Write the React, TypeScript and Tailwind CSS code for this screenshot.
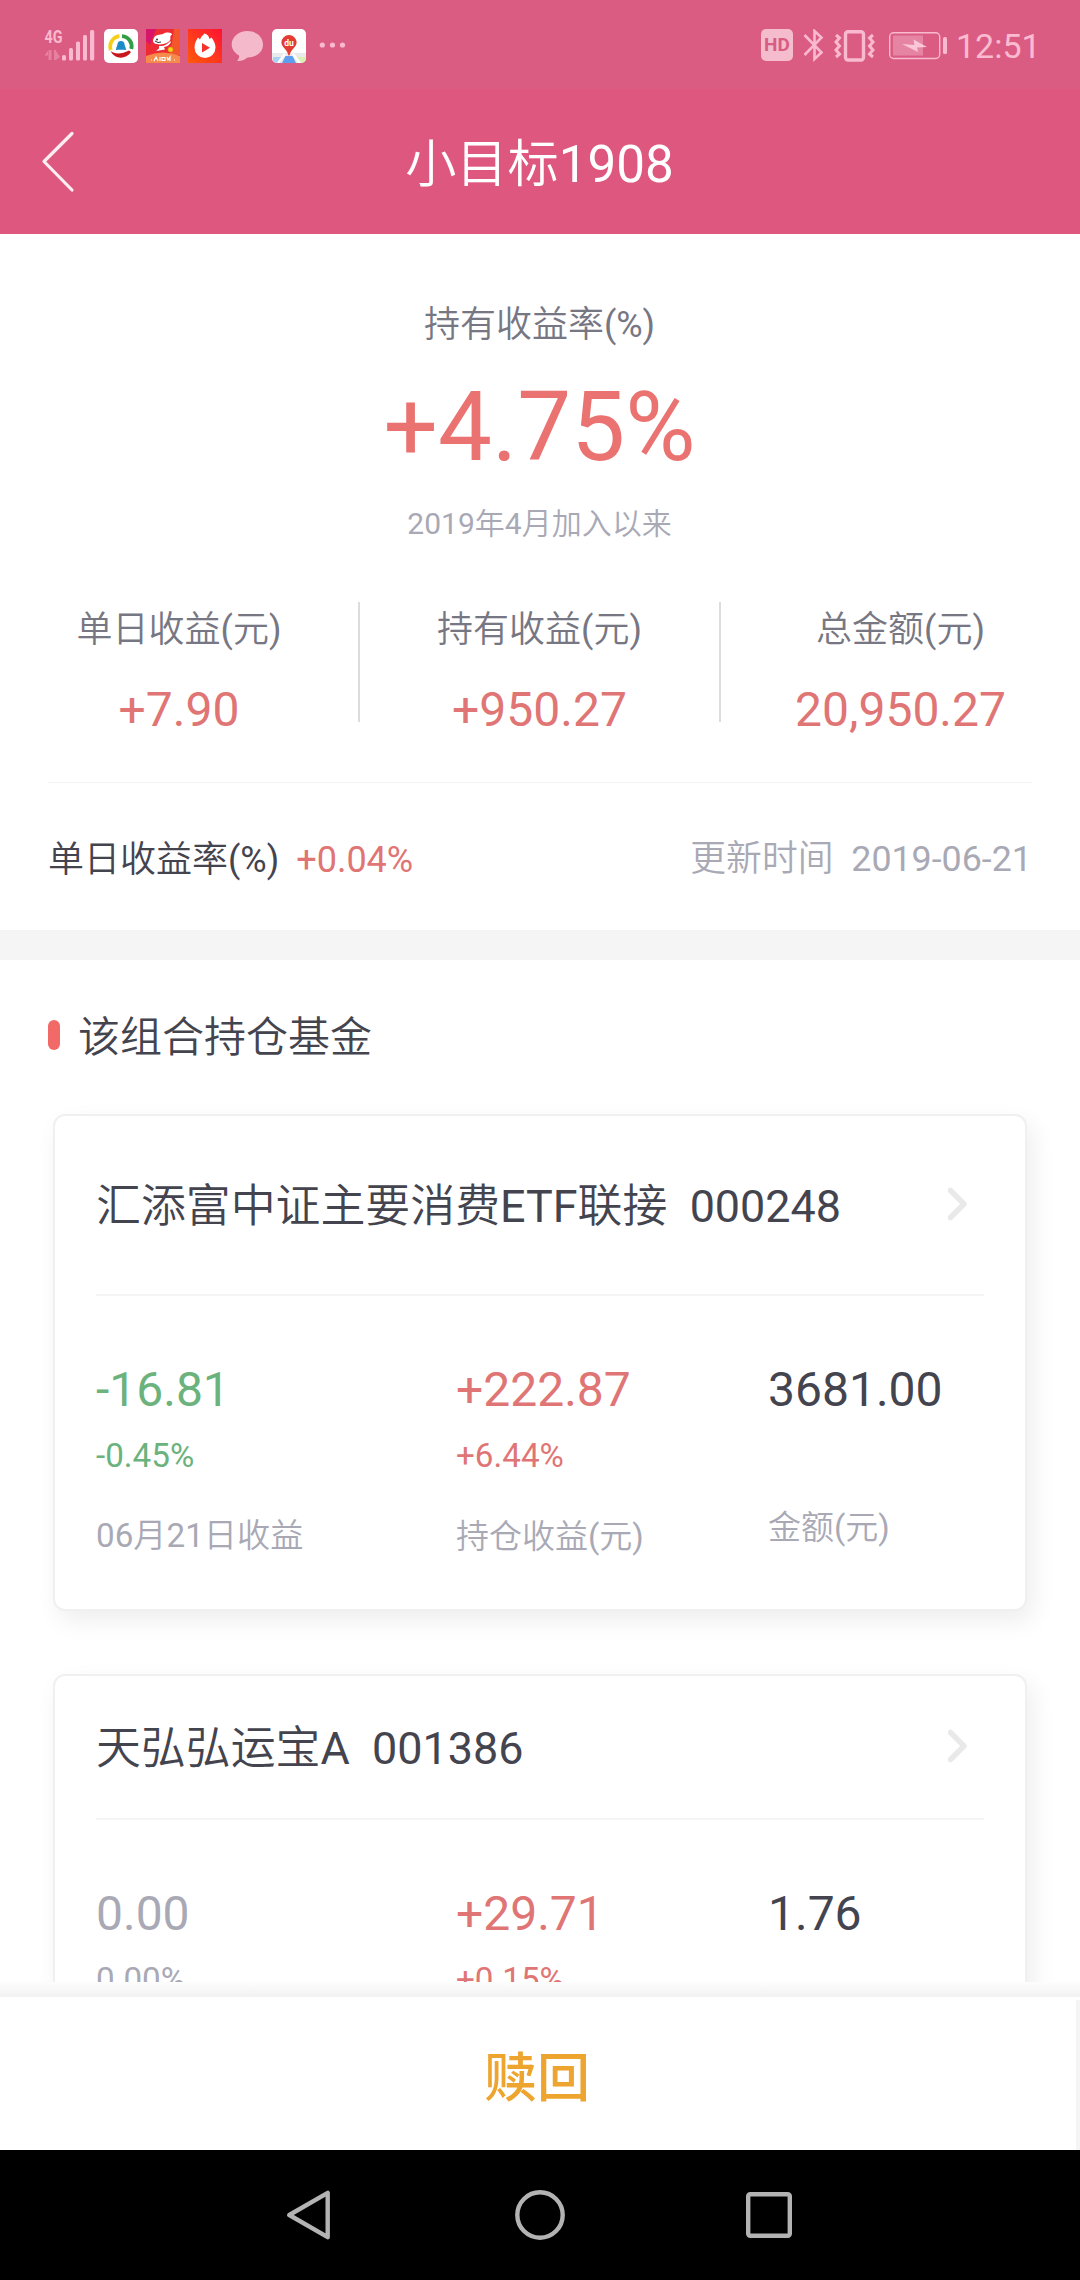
import { clsx } from "clsx";

const stats = [
    { label: "单日收益(元)", value: "+7.90" },
    { label: "持有收益(元)", value: "+950.27" },
    { label: "总金额(元)", value: "20,950.27" },
];

const funds = [
    {
        name: "汇添富中证主要消费ETF联接",
        code: "000248",
        day: "-16.81",
        dayRate: "-0.45%",
        dayColor: "text-[#6bb27d]",
        hold: "+222.87",
        holdRate: "+6.44%",
        amount: "3681.00",
        labels: ["06月21日收益", "持仓收益(元)", "金额(元)"],
        headHeight: "h-[178px]",
    },
    {
        name: "天弘弘运宝A",
        code: "001386",
        day: "0.00",
        dayRate: "0.00%",
        dayColor: "text-[#a9a9b5]",
        hold: "+29.71",
        holdRate: "+0.15%",
        amount: "1.76",
        labels: [],
        headHeight: "h-[142px]",
    },
];

const SignalIcon = () => (
    <svg className="-mt-2" width="52" height="42" viewBox="44 21 52 42" fill="#f9b9cf">
        <text x="44.5" y="43.2" fontSize="18.5" fontWeight="700" textLength="18" lengthAdjust="spacingAndGlyphs" fontFamily="Roboto">
            4G
        </text>
        <g opacity="0.4">
            <path d="M48.500 60V50L44.500 55.500H48V60ZM49 50H51.500V60H49ZM54 50H56V60H54ZM56 60V51L60 57Z" />
        </g>
        <rect x="62" y="55" width="4" height="5.500" rx="1.500" />
        <rect x="69" y="48" width="4" height="12.500" rx="1.500" />
        <rect x="76" y="41.500" width="4" height="19" rx="1.500" />
        <rect x="83" y="35" width="4" height="25.500" rx="1.500" />
        <rect x="90" y="30" width="4.200" height="30.500" rx="1.500" />
    </svg>
);

const TencentIcon = () => (
    <svg width="34" height="34" viewBox="0 0 34 34" fill="none">
        <rect width="34" height="34" rx="5" fill="#fff" />
        <path d="M18 7.200A10.200 10.200 0 0 1 27.300 20" stroke="#2f9e45" strokeWidth="3.800" />
        <path d="M6.800 21A10.400 10.400 0 0 1 15.500 7.200" stroke="#f4cf1a" strokeWidth="3.800" />
        <path d="M6.500 22C11 25.500 18 25 25 21.500L27 23C22 30.500 11 31 6.500 22Z" fill="#c8161d" />
        <path d="M12 21C12 18.500 13.200 17.500 13.400 15.500C13.600 13 15 12 17 12S20.400 13 20.600 15.500C20.800 17.500 22 18.500 22 21C20 20.500 14 20.500 12 21Z" fill="#1c8cc8" />
    </svg>
);

const JdIcon = () => (
    <svg width="34" height="34" viewBox="0 0 34 34">
        <rect width="34" height="34" fill="#ee2b35" />
        <path d="M0 0H10L4 16L0 12Z" fill="#d6156b" />
        <path d="M28 0H34V26H24Z" fill="#f5552b" />
        <path d="M0 34V27Q17 20 34 27V34Z" fill="#f58a4b" />
        <path d="M8 9C9 5.500 14 6 17 5C20 3 26 3 26 6C24.500 6 24 7.500 24.500 10C23 15 13 17 8 14C6.500 12.500 7 10 8 9Z" fill="#fff" />
        <path d="M13 17C18 17.500 22 15 24 12L25 13C23 16.500 21 17.500 18 18L19 20.500L10 22L13 19.500Z" fill="#fff" />
        <path d="M9 12Q12 14.500 15 13" stroke="#333" strokeWidth="1" fill="none" />
        <circle cx="11" cy="10.500" r="1" fill="#333" />
        <circle cx="24.500" cy="20.500" r="2.600" fill="#f7d11c" stroke="#c98c00" strokeWidth="0.600" />
        <path d="M5 31H6M8 32L10 28L12 32M14 28V32M16 28.500H19V31.500H16ZM21 28L22 31L24 28V32M28 31H29" stroke="#fff" strokeWidth="1.200" fill="none" />
    </svg>
);

const HuoshanIcon = () => (
    <svg width="34" height="34" viewBox="0 0 34 34">
        <defs>
            <linearGradient id="fire" x1="1" y1="0" x2="0" y2="1">
                <stop offset="0" stopColor="#ff1233" />
                <stop offset="1" stopColor="#ff5a0a" />
            </linearGradient>
        </defs>
        <rect width="34" height="34" fill="url(#fire)" />
        <path d="M16.500 4.500C19 5 21 7 21.500 10L23.500 8.500C26 12 27.500 15 27.500 18.500A10.500 10.500 0 0 1 6.500 18.500C6.500 14 8.500 11 10 8.500L12 10.500C13 8 14.500 6.500 16.500 4.500Z" fill="#fff" />
        <path d="M14 14L22 18.800L14 23.500Z" fill="#f6302a" />
    </svg>
);

const BaiduMapIcon = () => (
    <svg width="34" height="34" viewBox="0 0 34 34">
        <defs>
            <clipPath id="tile">
                <rect width="34" height="34" rx="5" />
            </clipPath>
        </defs>
        <g clipPath="url(#tile)">
            <rect width="34" height="34" fill="#fff" />
            <rect y="24" width="34" height="10" fill="#e9eaec" />
            <path d="M1 28H12L8 34H1Z" fill="#a9d2f5" />
            <path d="M13.500 27H20.500L24 34H10Z" fill="#5d9fee" />
            <path d="M22 28H34V34H27Z" fill="#d9efb4" />
            <path d="M13 25L6 34M21 25L28 34" stroke="#fff" strokeWidth="2.200" />
        </g>
        <path d="M17 6A7.600 7.600 0 0 1 24.600 13.500C24.600 18 19 20 17.500 26.500H16.500C15 20 9.400 18 9.400 13.500A7.600 7.600 0 0 1 17 6Z" fill="#e23c33" />
        <text x="17" y="17" fontSize="8.500" fontWeight="700" textAnchor="middle" fontFamily="Roboto" fill="#fff">
            du
        </text>
    </svg>
);

const VibrateIcon = () => (
    <svg className="ml-2" width="42" height="34" viewBox="833 28 42 34" fill="none" stroke="#f9b9cf">
        <rect x="845.500" y="30.700" width="18" height="28.300" rx="2.500" strokeWidth="3.400" />
        <path d="M836 34L839.500 37L836 41L839.500 45L836 49L839.500 53L836 56" strokeWidth="3" />
        <path d="M873 34L869.500 37L873 41L869.500 45L873 49L869.500 53L873 56" strokeWidth="3" />
    </svg>
);

const BatteryIcon = () => (
    <svg className="ml-[13px]" width="60" height="32" viewBox="888 29 60 32">
        <rect x="889.700" y="32.700" width="50" height="25.800" rx="4" fill="none" stroke="#f9b9cf" strokeWidth="1.400" />
        <rect x="893" y="35.500" width="30" height="20" fill="#e685a3" />
        <rect x="943" y="37" width="4" height="17" rx="1.500" fill="#f9b9cf" />
        <path d="M902 44L914.500 45L913.500 39.500L927 47L917 47.500L918 52Z" fill="#fbc6d7" />
    </svg>
);

const StatusBar = () => (
    <div className="flex h-[89px] items-start justify-between bg-[#da5c83] pl-11 pr-10 pt-[29px]">
        <div className="flex items-start">
            <SignalIcon />
            <div className="ml-2 flex gap-2">
                <TencentIcon />
                <JdIcon />
                <HuoshanIcon />
                <svg width="34" height="34" viewBox="230 29 34 34" fill="#f4b9cb">
                    <path d="M247.500 31C256.500 31 263 37 263 44.500S256.500 57.500 247.500 57.500C245.500 59.500 241 61.500 237 61C238.500 59.500 239.500 57.500 239 55.500C234.500 53 231.700 49 231.700 44.500C231.700 37 238.500 31 247.500 31Z" />
                </svg>
                <BaiduMapIcon />
            </div>
            <svg className="ml-3" width="30" height="34" viewBox="318 29 30 34" fill="#f9b9cf">
                <circle cx="322.300" cy="45" r="2.600" />
                <circle cx="332.500" cy="45" r="2.600" />
                <circle cx="342.500" cy="45" r="2.600" />
            </svg>
        </div>
        <div className="flex items-start">
            <div className="flex h-8 w-8 items-center justify-center rounded-[5px] bg-[#f4bccd] text-[19px] font-bold text-[#da5c83]">
                HD
            </div>
            <svg className="ml-2.5" width="22" height="33" viewBox="803 29 22 33" fill="none" stroke="#f9b9cf" strokeWidth="2.600">
                <path d="M804.500 35L821.500 52.500L814.500 59V31L821.500 37.500L804.500 55" />
            </svg>
            <VibrateIcon />
            <BatteryIcon />
            <span className="ml-2 w-[84px] whitespace-nowrap text-[34px] leading-[35px] text-[#fabbd0]">12:51</span>
        </div>
    </div>
);

const FundCard = ({ fund }: { fund: (typeof funds)[number] }) => (
    <div className="mx-[53px] h-[497px] shrink-0 rounded-xl border-2 border-[#f0f0f0] bg-white px-[41px] shadow-[6px_10px_24px_rgba(0,0,0,0.07)]">
        <div className={clsx("flex items-center justify-between", fund.headHeight)}>
            <h3 className="pt-1 text-[44.9px] leading-[50px] text-[#44444f]">
                {fund.name}&nbsp;&nbsp;{fund.code}
            </h3>
            <svg className="mb-0.5 mr-4" width="20" height="34" viewBox="0 0 20 34" fill="none" stroke="#e9e9e9" strokeWidth="5.500">
                <path d="M2.500 3.500L16 17L2.500 30.500" strokeLinecap="round" strokeLinejoin="round" />
            </svg>
        </div>
        <div className="h-0.5 bg-[#f5f5f5]" />
        <div className="grid grid-cols-[360px_312px_1fr] pt-[69px] text-[33.2px] leading-10">
            <div className={fund.dayColor}>
                <p className="text-5xl leading-[50px]">{fund.day}</p>
                <p className="mt-[21px]">{fund.dayRate}</p>
                <p className="mt-10 text-[#a9a9b5]">{fund.labels[0]}</p>
            </div>
            <div className="text-[#df7574]">
                <p className="text-5xl leading-[50px]">{fund.hold}</p>
                <p className="mt-[21px]">{fund.holdRate}</p>
                <p className="mt-[41px] text-[33px] text-[#a9a9b5]">{fund.labels[1]}</p>
            </div>
            <div className="text-[#44444f]">
                <p className="text-5xl leading-[50px]">{fund.amount}</p>
                <p className="mt-[93px] text-[33px] text-[#a9a9b5]">{fund.labels[2]}</p>
            </div>
        </div>
    </div>
);

const App = () => {
    return (
        <div className="flex h-[2280px] w-[1080px] flex-col overflow-hidden bg-white font-[Roboto,'Noto_Sans_CJK_SC_DemiLight','Noto_Sans_CJK_SC',sans-serif]">
            <StatusBar />
            {/* Header */}
            <div className="grid h-[145px] grid-cols-[1fr_auto_1fr] items-center bg-[#de577f] px-10">
                <svg width="36" height="62" viewBox="40 131 36 62" fill="none" stroke="#fdeef3" strokeWidth="3.200" strokeLinecap="round" strokeLinejoin="round">
                    <path d="M72 133.500L44 161.500L72 190" />
                </svg>
                <h1 className="pr-px pt-[7px] text-[51.2px] leading-[60px] text-white">小目标1908</h1>
            </div>

            <div className="flex min-h-0 flex-1 flex-col overflow-hidden">
                {/* Summary */}
                <div className="flex shrink-0 flex-col items-center pr-px pt-[71px]">
                    <p className="text-4xl leading-10 text-[#777783]">持有收益率(%)</p>
                    <p className="mt-8 text-8xl leading-[100px] text-[#ea7372]">+4.75%</p>
                    <p className="mt-[27px] text-3xl leading-10 text-[#a9a9b5]">2019年4月加入以来</p>
                </div>
                <div className="mt-[58px] grid h-[120px] shrink-0 grid-cols-[360px_361px_359px]">
                    {stats.map((item, i) => (
                        <div
                            key={item.label}
                            className={clsx("flex h-[120px] flex-col items-center pt-2", i < 2 && "border-r-2 border-[#dcdcde]")}
                        >
                            <p className="text-4xl leading-10 text-[#777783]">{item.label}</p>
                            <p className="mt-[35px] text-5xl leading-[50px] text-[#df7574]">{item.value}</p>
                        </div>
                    ))}
                </div>
                <div className="mx-12 mt-[60px] h-px shrink-0 bg-[#f3f3f3]" />
                <div className="flex h-[147px] shrink-0 items-center justify-between px-12 pt-1.5 text-4xl">
                    <div className="flex gap-[17px]">
                        <span className="text-[#44444f]">单日收益率(%)</span>
                        <span className="text-[#df7574]">+0.04%</span>
                    </div>
                    <span className="text-[35.8px] text-[#a9a9b5]">更新时间&nbsp;&nbsp;2019-06-21</span>
                </div>
                <div className="h-[30px] shrink-0 bg-[#f5f5f5]" />

                {/* Holdings */}
                <div className="mb-1 flex h-[150px] shrink-0 items-center gap-[18px] px-12">
                    <div className="h-[30px] w-3 rounded-full bg-[#f26a68]" />
                    <h2 className="pt-[5px] text-[42px] leading-[50px] text-[#44444f]">该组合持仓基金</h2>
                </div>
                <div className="flex flex-col gap-[63px]">
                    {funds.map((fund) => (
                        <FundCard key={fund.code} fund={fund} />
                    ))}
                </div>
            </div>

            {/* Redeem button */}
            <div className="h-[15px] bg-gradient-to-b from-[#fdfdfd] to-[#f2f2f2]" />
            <div className="flex h-[153px] bg-white">
                <button className="flex-1 pr-0.5 pt-px font-['Noto_Sans_CJK_SC',sans-serif] text-[53px] font-medium leading-[60px] text-[#eea52f]">赎回</button>
                <div className="mt-[3px] w-1 bg-[#f5f5f5]" />
            </div>

            {/* System navigation */}
            <div className="flex h-[130px] items-center justify-center gap-[180px] bg-black">
                <svg width="50" height="50" viewBox="0 0 50 50" fill="none" stroke="#b3b3b3" strokeWidth="4.400" strokeLinejoin="round">
                    <path d="M42.700 2.800V47.200L4.300 25Z" />
                </svg>
                <svg width="50" height="50" viewBox="0 0 50 50" fill="none" stroke="#b3b3b3" strokeWidth="4.400">
                    <circle cx="25" cy="25" r="22.700" />
                </svg>
                <svg width="50" height="50" viewBox="0 0 50 50" fill="none" stroke="#b3b3b3" strokeWidth="4.400">
                    <rect x="3.200" y="4.200" width="41.600" height="41.600" rx="2" />
                </svg>
            </div>
        </div>
    );
};

export default App;
